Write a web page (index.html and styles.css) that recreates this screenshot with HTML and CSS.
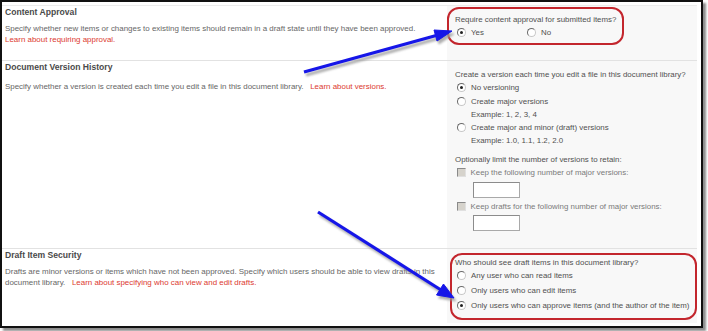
FILE: index.html
```html
<!DOCTYPE html>
<html>
  <head>
    <meta charset="utf-8">
    <title>Document Library Versioning Settings</title>
    <link rel="stylesheet" href="styles.css">
  </head>
  <body>
    <div id="shot">
      <div id="frame">

        <div class="section s-approval">
          <div class="left">
            <h3>Content Approval</h3>
            <p class="desc">
              Specify whether new items or changes to existing items should remain in a draft state until they have been approved.<br>
              <a href="#">Learn about requiring approval.</a>
            </p>
          </div>
          <div class="right">
            <div class="callout approval-box">
              <div class="q">Require content approval for submitted items?</div>
              <div class="inline-opts">
                <span class="opt first"><span class="radio checked"></span>Yes</span>
                <span class="opt"><span class="radio"></span>No</span>
              </div>
            </div>
          </div>
        </div>

        <div class="section s-versions">
          <div class="left">
            <h3>Document Version History</h3>
            <p class="desc">
              Specify whether a version is created each time you edit a file in this document library. &nbsp;&nbsp;<a href="#">Learn about versions.</a>
            </p>
          </div>
          <div class="right">
            <div class="q">Create a version each time you edit a file in this document library?</div>
            <div class="opt row"><span class="radio checked"></span>No versioning</div>
            <div class="opt row"><span class="radio"></span>Create major versions</div>
            <div class="example">Example: 1, 2, 3, 4</div>
            <div class="opt row"><span class="radio"></span>Create major and minor (draft) versions</div>
            <div class="example">Example: 1.0, 1.1, 1.2, 2.0</div>

            <div class="q limit">Optionally limit the number of versions to retain:</div>
            <div class="opt row disabled"><span class="check"></span>Keep the following number of major versions:</div>
            <input class="num" type="text" disabled>
            <div class="opt row disabled second"><span class="check"></span>Keep drafts for the following number of major versions:</div>
            <input class="num last" type="text" disabled>
          </div>
        </div>

        <div class="section s-drafts">
          <div class="left">
            <h3>Draft Item Security</h3>
            <p class="desc">
              Drafts are minor versions or items which have not been approved. Specify which users should be able to view drafts in this<br>
              document library. &nbsp;&nbsp;<a href="#">Learn about specifying who can view and edit drafts.</a>
            </p>
          </div>
          <div class="right">
            <div class="callout drafts-box">
              <div class="q">Who should see draft items in this document library?</div>
              <div class="opt row tall"><span class="radio"></span>Any user who can read items</div>
              <div class="opt row tall"><span class="radio"></span>Only users who can edit items</div>
              <div class="opt row tall"><span class="radio checked"></span>Only users who can approve items (and the author of the item)</div>
            </div>
          </div>
        </div>

      </div>

      <!-- annotation arrows drawn over the screenshot -->
      <svg id="arrows" width="708" height="331" viewBox="0 0 708 331">
        <defs>
          <filter id="soft" x="-10%" y="-10%" width="120%" height="120%">
            <feGaussianBlur stdDeviation="1.2"/>
          </filter>
        </defs>
        <g fill="#9a9a9a" stroke="#9a9a9a" opacity="0.8" filter="url(#soft)" transform="translate(2,3)">
          <line x1="304" y1="72" x2="438" y2="35" stroke-width="3.2"/>
          <polygon points="452,31 437,41 434,30"/>
          <line x1="318" y1="212" x2="441" y2="290" stroke-width="3.2"/>
          <polygon points="454,298 436.5,295 443.5,284"/>
        </g>
        <g fill="#1616e8" stroke="#1616e8">
          <line x1="304" y1="72" x2="438" y2="35" stroke-width="3.2"/>
          <polygon points="452,31 437,41 434,30"/>
          <line x1="318" y1="212" x2="441" y2="290" stroke-width="3.2"/>
          <polygon points="454,298 436.5,295 443.5,284"/>
        </g>
      </svg>
    </div>
  </body>
</html>
```

FILE: styles.css
```css
body {
  margin: 0;
  background: #fff;
  font-family: "Liberation Sans", Arial, sans-serif;
}
#shot {
  position: relative;
  width: 708px;
  height: 331px;
}
#frame {
  width: 699px;
  height: 321px;
  border: 2px solid #111;
  box-shadow: 3px 3px 2px rgba(0, 0, 0, 0.45);
  background: #fff;
  padding-top: 3px;
  box-sizing: content-box;
  overflow: hidden;
}
#arrows {
  position: absolute;
  left: 0;
  top: 0;
  pointer-events: none;
}

/* sections */
.section {
  display: flex;
  padding-right: 4px;
}
.left {
  flex: none;
  width: 445px;
  box-sizing: border-box;
  padding-left: 3px;
  border-top: 1px solid #e2e2e2;
}
.right {
  flex: none;
  width: 250px;
  box-sizing: border-box;
  background: #f8f8f8;
  border-top: 1px solid #e2e2e2;
  color: #505050;
  font-size: 7.9px;
}
.s-approval { height: 55px; }
.s-versions { height: 188px; }
.s-drafts { height: 75px; }
.s-approval .left, .s-approval .right { border-top-color: #ececec; }

h3 {
  margin: 0;
  padding-top: 1px;
  font-size: 8.6px;
  line-height: 11px;
  font-weight: bold;
  color: #4a4a4a;
}
.desc {
  margin: 4.5px 0 0 0;
  font-size: 7.95px;
  line-height: 11px;
  color: #666;
}
.s-versions .desc { margin-top: 7.5px; }
.desc a {
  color: #dc3a30;
  text-decoration: none;
}

/* right side controls */
.q {
  line-height: 11px;
}
.s-versions .right {
  padding-left: 8px;
}
.s-versions .q {
  margin-top: 7.5px;
  line-height: 12px;
}
.s-versions .q.limit {
  margin-top: 7px;
}
.row {
  line-height: 14px;
  display: flex;
  align-items: center;
  padding-left: 1.5px;
}
.example {
  line-height: 12px;
  padding-left: 16px;
}
.disabled {
  color: #7a7a7a;
}
.row.second {
  margin-top: 2px;
}
.num {
  display: block;
  width: 47px;
  height: 16px;
  box-sizing: border-box;
  margin: 2px 0 0 18px;
  padding: 0;
  background: #fff;
  border: 1px solid #a9a9a9;
  border-top-color: #8c8c8c;
  border-left-color: #8c8c8c;
}
.num.last {
  margin-top: 1px;
}

.callout {
  border: 2px solid #c3262d;
  border-radius: 12px;
}
.approval-box {
  display: inline-block;
  margin-top: 1px;
  padding: 4.5px 6px 3.5px 6px;
}
.inline-opts {
  display: flex;
  line-height: 15px;
  padding-left: 1.5px;
}
.inline-opts .opt {
  display: flex;
  align-items: center;
}
.inline-opts .opt.first {
  width: 70px;
}
.drafts-box {
  margin: 4px 0 0 3px;
  height: 61px;
  padding: 1.5px 3px 0 3px;
}
.drafts-box .q {
  line-height: 11px;
}
.row.tall {
  line-height: 15px;
}

.radio {
  display: inline-block;
  width: 9px;
  height: 9px;
  box-sizing: border-box;
  border-radius: 50%;
  border: 1px solid;
  border-color: #6a6a6a #c8c8c8 #c8c8c8 #6a6a6a;
  background: #fff;
  margin-right: 5.5px;
  position: relative;
  flex: none;
}
.radio.checked::after {
  content: "";
  position: absolute;
  left: 2px;
  top: 2px;
  width: 3px;
  height: 3px;
  border-radius: 50%;
  background: #222;
}
.check {
  display: inline-block;
  width: 9px;
  height: 9px;
  box-sizing: border-box;
  border: 1px solid;
  border-color: #8a8a8a #e0e0e0 #e0e0e0 #8a8a8a;
  background: #d6d3cc;
  margin-right: 5px;
  flex: none;
}
```
